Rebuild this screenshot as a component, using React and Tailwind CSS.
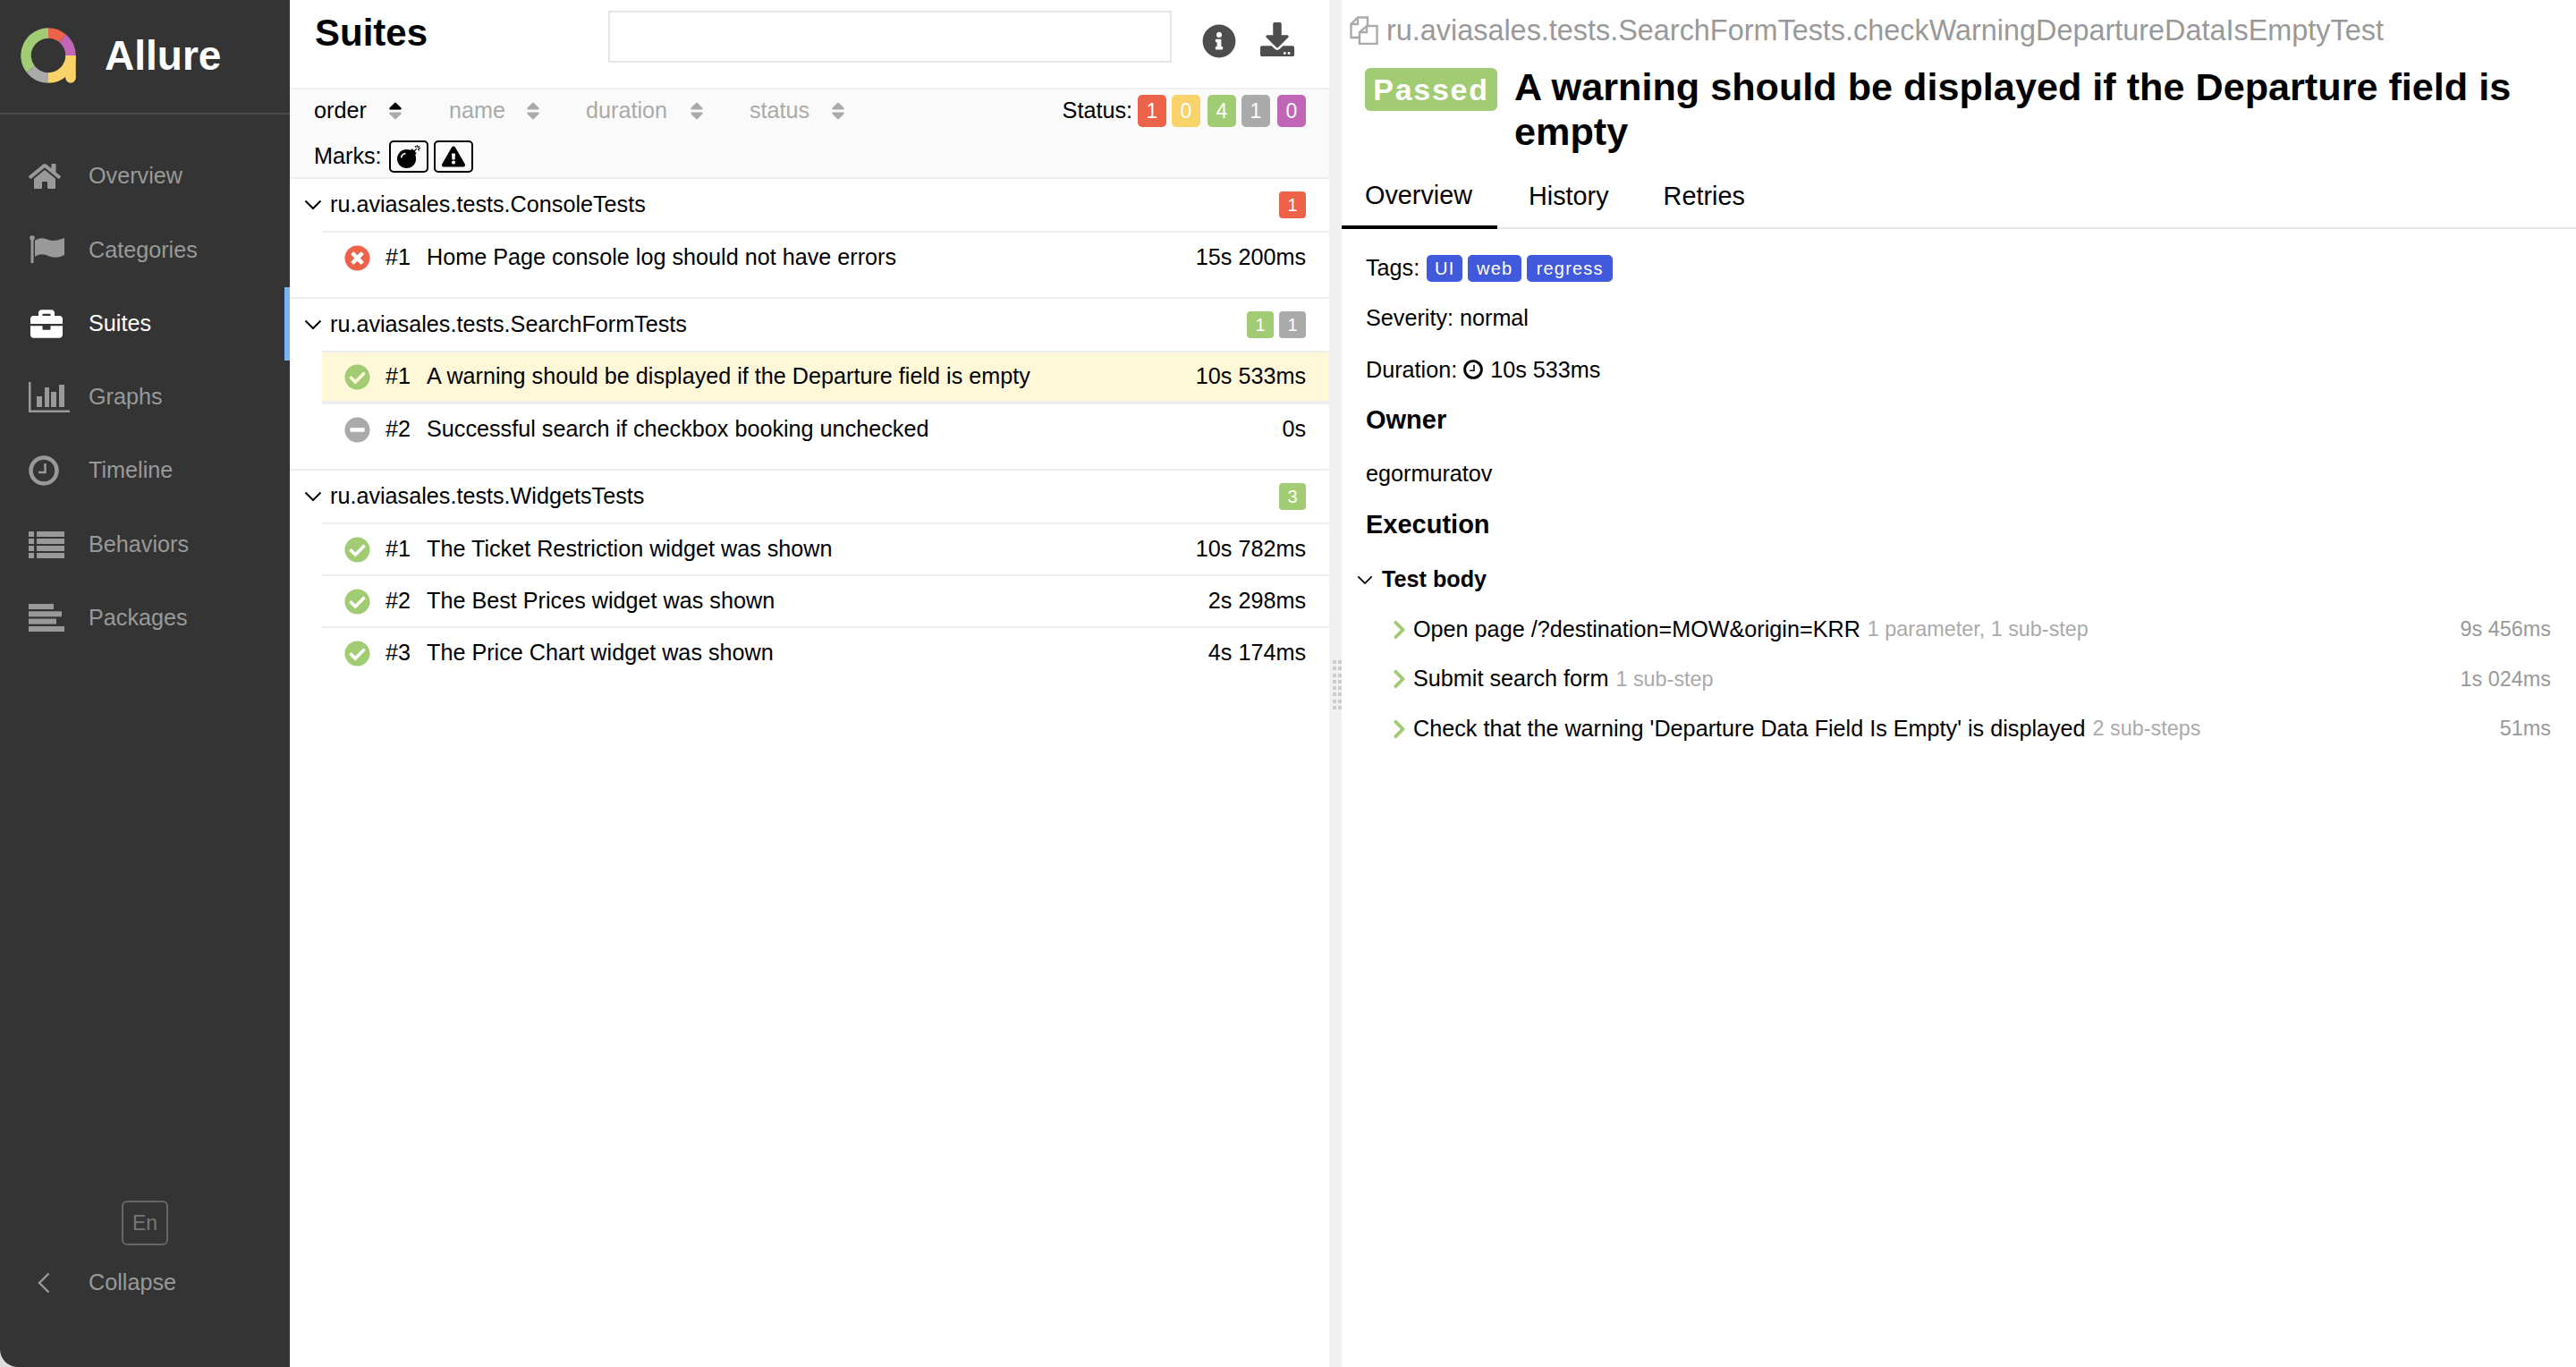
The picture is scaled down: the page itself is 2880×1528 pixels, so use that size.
import React from 'react';
import {
    FaHome, FaBriefcase,
    FaCheckCircle, FaTimesCircle, FaMinusCircle, FaInfoCircle, FaDownload,
    FaBomb, FaExclamationTriangle, FaChevronRight, FaSort, FaSortUp,
} from 'react-icons/fa';

const FONT = "font-['Liberation_Sans',Arial,sans-serif]";

function FlagIcon() {
    return (
        <svg viewBox="0 0 40 32" className="w-[40px] h-[32px]" fill="currentColor">
            <rect x="2.5" y="2" width="3" height="29" />
            <circle cx="4" cy="3" r="2.8" />
            <path d="M7 6 C12 2 17 3 22 5 C27 7 32 6 40 3 V22 C32 26 27 25 22 23 C17 21 12 20 7 24 Z" />
        </svg>
    );
}

function GraphIcon() {
    return (
        <svg viewBox="0 0 46 34" className="w-[46px] h-[34px]" fill="currentColor">
            <rect x="0" y="0" width="2.5" height="34" />
            <rect x="0" y="31.5" width="46" height="2.5" />
            <rect x="9" y="16" width="6" height="12" />
            <rect x="18" y="6" width="5" height="22" />
            <rect x="25" y="11" width="6" height="17" />
            <rect x="34" y="3" width="6" height="25" />
        </svg>
    );
}

function ClockIcon({ className }) {
    return (
        <svg viewBox="0 0 34 34" className={className} fill="none" stroke="currentColor">
            <circle cx="17" cy="17" r="14.5" strokeWidth="4.5" />
            <path d="M18.5 9 V19 H11" strokeWidth="2.5" />
        </svg>
    );
}

function ListIcon() {
    return (
        <svg viewBox="0 0 40 30" className="w-[40px] h-[30px]" fill="currentColor">
            {[0, 8, 16, 24].map((y) => (
                <g key={y}>
                    <rect x="0" y={y} width="6" height="6" />
                    <rect x="9" y={y} width="31" height="6" />
                </g>
            ))}
        </svg>
    );
}

function PackagesIcon() {
    return (
        <svg viewBox="0 0 40 31" className="w-[40px] h-[31px]" fill="currentColor">
            <rect x="0" y="0" width="28" height="6" />
            <rect x="0" y="8.3" width="37" height="6" />
            <rect x="0" y="16.6" width="31" height="6" />
            <rect x="0" y="25" width="40" height="6" />
        </svg>
    );
}

function CopyIcon() {
    return (
        <svg viewBox="0 0 32 32" className="w-[32px] h-[32px] mr-[9px] text-[#aaaaaa] shrink-0" fill="none" stroke="currentColor" strokeWidth="2.4">
            <path d="M11 24 H1.5 V9 L9 1.5 H20 V11" />
            <path d="M9 1.5 V9 H1.5" />
            <path d="M19 11 H30.5 V31 H11 V18 Z" />
            <path d="M19 11 V18 H11" />
        </svg>
    );
}

function DownChevron({ className }) {
    return (
        <svg viewBox="0 0 20 12" className={className} fill="none" stroke="currentColor" strokeWidth="2">
            <path d="M1.5 1.5 L10 10 L18.5 1.5" />
        </svg>
    );
}

const navItems = [
    { label: 'Overview', icon: <FaHome className="w-[36px] h-[32px]" /> },
    { label: 'Categories', icon: <FlagIcon /> },
    { label: 'Suites', icon: <FaBriefcase className="w-[40px] h-[36px]" />, active: true },
    { label: 'Graphs', icon: <GraphIcon /> },
    { label: 'Timeline', icon: <ClockIcon className="w-[34px] h-[34px]" /> },
    { label: 'Behaviors', icon: <ListIcon /> },
    { label: 'Packages', icon: <PackagesIcon /> },
];

const chipColors = {
    failed: 'bg-[#ed6349]',
    broken: 'bg-[#fad26a]',
    passed: 'bg-[#a2cc74]',
    skipped: 'bg-[#aaaaaa]',
    unknown: 'bg-[#c166b7]',
};

const statusIcons = {
    passed: <FaCheckCircle className="w-[29px] h-[29px] text-[#a2cc74]" />,
    failed: <FaTimesCircle className="w-[29px] h-[29px] text-[#ed6349]" />,
    skipped: <FaMinusCircle className="w-[29px] h-[29px] text-[#aaaaaa]" />,
};

const groups = [
    {
        name: 'ru.aviasales.tests.ConsoleTests',
        counts: [['failed', 1]],
        tests: [{ n: 1, status: 'failed', name: 'Home Page console log should not have errors', time: '15s 200ms' }],
    },
    {
        name: 'ru.aviasales.tests.SearchFormTests',
        counts: [['passed', 1], ['skipped', 1]],
        tests: [
            { n: 1, status: 'passed', name: 'A warning should be displayed if the Departure field is empty', time: '10s 533ms', selected: true },
            { n: 2, status: 'skipped', name: 'Successful search if checkbox booking unchecked', time: '0s' },
        ],
    },
    {
        name: 'ru.aviasales.tests.WidgetsTests',
        counts: [['passed', 3]],
        tests: [
            { n: 1, status: 'passed', name: 'The Ticket Restriction widget was shown', time: '10s 782ms' },
            { n: 2, status: 'passed', name: 'The Best Prices widget was shown', time: '2s 298ms' },
            { n: 3, status: 'passed', name: 'The Price Chart widget was shown', time: '4s 174ms' },
        ],
    },
];

const steps = [
    { name: 'Open page /?destination=MOW&origin=KRR', meta: '1 parameter, 1 sub-step', time: '9s 456ms' },
    { name: 'Submit search form', meta: '1 sub-step', time: '1s 024ms' },
    { name: "Check that the warning 'Departure Data Field Is Empty' is displayed", meta: '2 sub-steps', time: '51ms' },
];

function Logo() {
    return (
        <svg viewBox="0 0 62 62" className="w-[62px] h-[62px] shrink-0" fill="none" strokeWidth="11.5">
            <path d="M31 6 A25 25 0 0 1 47.07 11.85" stroke="#ed6349" />
            <path d="M47.07 11.85 A25 25 0 0 1 56 31" stroke="#c166b7" />
            <path d="M56 31 A25 25 0 0 1 31 56" stroke="#fad26a" />
            <path d="M31 56 A25 25 0 0 1 11.3 46.4" stroke="#aaaaaa" />
            <path d="M11.3 46.4 A25 25 0 0 1 31 6" stroke="#a2cc74" />
            <path d="M56 31 V56" stroke="#fad26a" />
            <circle cx="56" cy="56" r="5.75" fill="#fad26a" />
        </svg>
    );
}

function SortHead({ label, active, boxClass, labelClass }) {
    return (
        <div className={`flex items-center ${boxClass}`}>
            <span className={`${labelClass} ${active ? 'text-black' : 'text-[#aaaaaa]'}`}>{label}</span>
            <span className="relative w-[16px] h-[24px] text-[#aaaaaa]">
                <FaSort className="absolute inset-0 w-[16px] h-[24px]" />
                {active && <FaSortUp className="absolute inset-0 w-[16px] h-[24px] text-black" />}
            </span>
        </div>
    );
}

function Chip({ status, value, big }) {
    return (
        <span className={`${chipColors[status]} inline-flex items-center justify-center text-white ${big ? 'w-[32px] h-[36px] rounded-[5px] text-[23px]' : 'w-[30px] h-[30px] rounded-[4px] text-[20px]'}`}>
            {value}
        </span>
    );
}

function Sidebar() {
    return (
        <div className="w-[324px] shrink-0 bg-[#dddddd]">
            <aside className="relative h-full bg-[#343434] rounded-bl-[20px] flex flex-col">
                <div className="h-[128px] border-b-2 border-[#4a4a4a] flex items-center pl-[23px] gap-[32px] pb-[2px]">
                    <Logo />
                    <span className="text-[46px] font-bold text-white leading-none">Allure</span>
                </div>
                <nav className="pt-[28px]">
                    {navItems.map(({ label, icon, active }) => (
                        <div key={label} className={`relative h-[82.3px] flex items-center pl-[32px] ${active ? 'text-white' : 'text-[#999999]'}`}>
                            <span className="w-[67px] shrink-0 flex">{icon}</span>
                            <span className="text-[25.2px]">{label}</span>
                            {active && <span className="absolute right-0 top-0 h-full w-[6px] bg-[#77b3f2]" />}
                        </div>
                    ))}
                </nav>
                <div className="mt-auto pb-[64px]">
                    <div className="w-[52px] h-[50px] ml-[136px] mb-[12px] border-2 border-[#666666] rounded-[6px] flex items-center justify-center text-[23px] text-[#777777]">En</div>
                    <div className="h-[60px] flex items-center text-[#999999]">
                        <svg viewBox="0 0 14 24" className="w-[14px] h-[24px] ml-[42px] mr-[43px]" fill="none" stroke="currentColor" strokeWidth="2.4">
                            <path d="M12.5 1.5 L2 12 L12.5 22.5" />
                        </svg>
                        <span className="text-[25.2px]">Collapse</span>
                    </div>
                </div>
            </aside>
        </div>
    );
}

function SuitesPane() {
    return (
        <section className="w-[1162px] shrink-0 bg-white text-[25.2px] text-black">
            <div className="h-[100px] border-b-2 border-[#eeeeee] flex items-start pl-[28px]">
                <h2 className="w-[328px] text-[42px] font-bold leading-none mt-[16px]">Suites</h2>
                <div className="w-[630px] h-[58px] mt-[12px] border-2 border-[#e6e6e6]" />
                <FaInfoCircle className="w-[38px] h-[38px] ml-[34px] mt-[27px] text-[#4d4d4d]" />
                <FaDownload className="w-[42px] h-[38px] ml-[25px] mt-[25px] text-[#4d4d4d]" />
            </div>

            <div className="h-[100px] bg-[#fafafa] border-b-2 border-[#eeeeee] pl-[27px] pr-[26px] pt-[6px]">
                <div className="flex items-center h-[36px]">
                    <SortHead label="order" active boxClass="w-[151px]" labelClass="w-[83px]" />
                    <SortHead label="name" boxClass="w-[153px]" labelClass="w-[86px]" />
                    <SortHead label="duration" boxClass="w-[183px]" labelClass="w-[116px]" />
                    <SortHead label="status" boxClass="w-[130px]" labelClass="w-[91px]" />
                    <div className="ml-auto flex items-center gap-[6px]">
                        <span>Status:</span>
                        <Chip big status="failed" value="1" />
                        <Chip big status="broken" value="0" />
                        <span className="ml-[2px]"><Chip big status="passed" value="4" /></span>
                        <Chip big status="skipped" value="1" />
                        <span className="ml-[2px]"><Chip big status="unknown" value="0" /></span>
                    </div>
                </div>
                <div className="flex items-center gap-[6px] mt-[14px]">
                    <span className="mr-[2px]">Marks:</span>
                    <span className="w-[44px] h-[36px] border-2 border-black rounded-[5px] flex items-center justify-center">
                        <FaBomb className="w-[26px] h-[26px]" />
                    </span>
                    <span className="w-[44px] h-[36px] border-2 border-black rounded-[5px] flex items-center justify-center">
                        <FaExclamationTriangle className="w-[26px] h-[24px]" />
                    </span>
                </div>
            </div>

            {groups.map((group, i) => (
                <div key={group.name} className={`pb-[16px] ${i < groups.length - 1 ? 'border-b-2 border-[#eeeeee]' : ''}`}>
                    <div className="h-[58px] flex items-center pl-[16px] pr-[26px]">
                        <DownChevron className="w-[20px] h-[12px] mr-[9px]" />
                        <span>{group.name}</span>
                        <div className="ml-auto flex gap-[6px]">
                            {group.counts.map(([status, value]) => <Chip key={status} status={status} value={value} />)}
                        </div>
                    </div>
                    <div className="ml-[36px]">
                        {group.tests.map((test) => (
                            <div key={test.n} className={`h-[58px] flex items-center border-t-2 border-[#eeeeee] pl-[25px] pr-[26px] ${test.selected ? 'bg-[#fef8d8] border-b-2' : ''}`}>
                                {statusIcons[test.status]}
                                <span className="w-[46px] ml-[17px]">#{test.n}</span>
                                <span>{test.name}</span>
                                <span className="ml-auto">{test.time}</span>
                            </div>
                        ))}
                    </div>
                </div>
            ))}
        </section>
    );
}

function Splitter() {
    return (
        <div className="w-[14px] shrink-0 bg-[#eff0f2] pt-[738px] pl-[4px]">
            <div className="grid grid-cols-[4px_4px] gap-x-[2px] gap-y-[3.3px]">
                {Array.from({ length: 16 }, (_, i) => <span key={i} className="h-[4px] bg-[#cccccc]" />)}
            </div>
        </div>
    );
}

function DetailPane() {
    return (
        <section className="flex-1 min-w-0 bg-white text-[25.2px] text-black">
            <div className="h-[68px] flex items-center pl-[9px] text-[#999999] text-[32.4px]">
                <CopyIcon />
                <span>ru.aviasales.tests.SearchFormTests.checkWarningDepartureDataIsEmptyTest</span>
            </div>
            <div className="flex pl-[26px] pr-[60px] items-start">
                <span className="mt-[8px] w-[148px] h-[48px] bg-[#a2cc74] rounded-[6px] flex items-center justify-center text-white font-bold text-[34px] tracking-[1.7px] shrink-0">Passed</span>
                <h1 className="ml-[19px] text-[43.2px] font-bold leading-[50px] mt-[4px]">A warning should be displayed if the Departure field is empty</h1>
            </div>
            <div className="flex h-[74px] mt-[10px] border-b-2 border-[#e6e6e6] text-[28.8px]">
                <div className="w-[174px] pl-[26px] pt-[4px] border-b-4 border-black h-[74px] flex items-center">Overview</div>
                <div className="pl-[35px] pt-[4px] flex items-center h-[72px]">History</div>
                <div className="pl-[61px] pt-[4px] flex items-center h-[72px]">Retries</div>
            </div>

            <div className="pl-[27px] pr-[28px]">
                <div className="flex items-center h-[30px] mt-[29px] gap-[6px]">
                    <span className="mr-[2px]">Tags:</span>
                    {[['UI', 'w-[40px]'], ['web', 'w-[60px]'], ['regress', 'w-[96px]']].map(([tag, w]) => (
                        <span key={tag} className={`${w} h-[30px] bg-[#4159dc] rounded-[5px] flex items-center justify-center text-white text-[20px] tracking-[1.2px]`}>{tag}</span>
                    ))}
                </div>
                <div className="mt-[25px] leading-[30px]">Severity: normal</div>
                <div className="mt-[28px] leading-[30px] flex items-center">
                    Duration:
                    <ClockIcon className="w-[22px] h-[22px] ml-[7px] mr-[8px]" />
                    10s 533ms
                </div>
                <h3 className="mt-[25px] text-[29px] font-bold leading-[32px]">Owner</h3>
                <div className="mt-[29px] leading-[30px]">egormuratov</div>
                <h3 className="mt-[26px] text-[29px] font-bold leading-[32px]">Execution</h3>
            </div>

            <div className="flex items-center mt-[31px] h-[30px] pl-[17px] font-bold">
                <DownChevron className="w-[18px] h-[11px] mr-[10px]" />
                Test body
            </div>
            <div className="mt-[13px] pl-[56px] pr-[28px]">
                {steps.map((step) => (
                    <div key={step.name} className="h-[55.5px] flex items-center">
                        <FaChevronRight className="w-[17px] h-[24px] mr-[7px] text-[#a2cc74]" />
                        <span>{step.name}</span>
                        <span className="ml-[8px] text-[23.4px] text-[#aaaaaa]">{step.meta}</span>
                        <span className="ml-auto text-[23.4px] text-[#999999]">{step.time}</span>
                    </div>
                ))}
            </div>
        </section>
    );
}

export default function App() {
    return (
        <div className={`${FONT} flex h-[1528px] bg-white overflow-hidden`}>
            <Sidebar />
            <SuitesPane />
            <Splitter />
            <DetailPane />
        </div>
    );
}
